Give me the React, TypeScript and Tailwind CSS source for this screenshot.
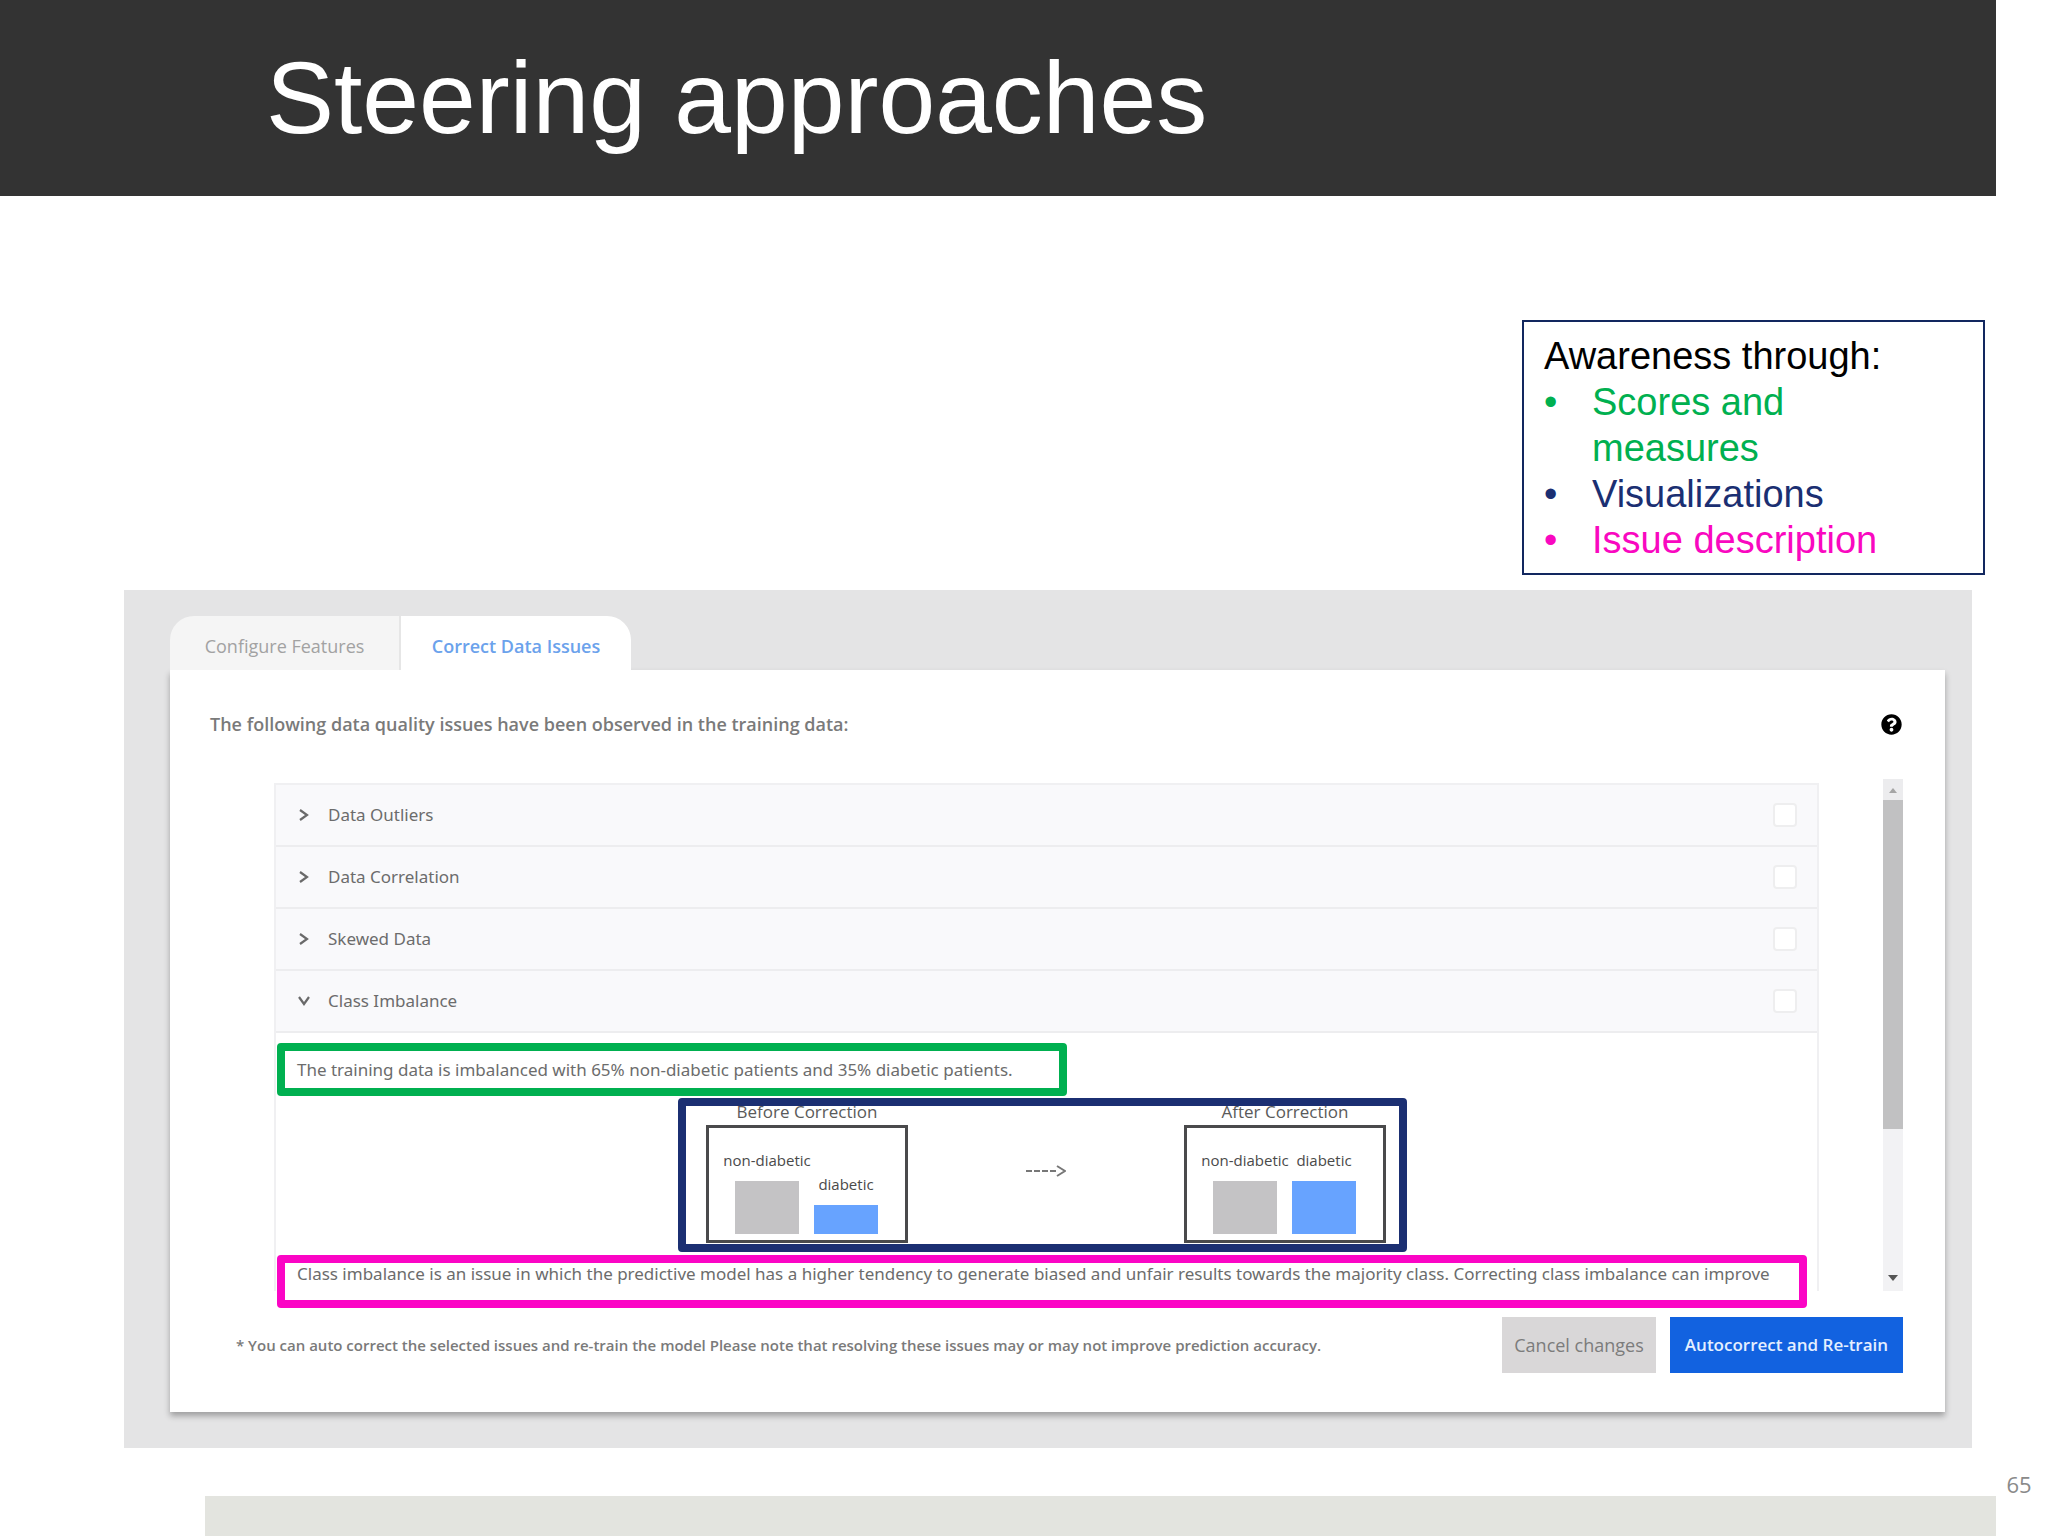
import { FaQuestionCircle } from "react-icons/fa";

const ISSUES = [
  { name: "Data Outliers", open: false },
  { name: "Data Correlation", open: false },
  { name: "Skewed Data", open: false },
  { name: "Class Imbalance", open: true },
];

const LEGEND = [
  { text: "Scores and measures", color: "text-[#00b050]" },
  { text: "Visualizations", color: "text-[#1b2f72]" },
  { text: "Issue description", color: "text-[#f908c0]" },
];

function Chevron({ open }: { open: boolean }) {
  return (
    <svg viewBox="0 0 12 12" className="h-3 w-3" fill="none" stroke="#6a6a6a" strokeWidth="2.2" aria-hidden="true">
      {open ? <path d="M1 2 L6 9 L11 2" /> : <path d="M2 1 L9 6 L2 11" />}
    </svg>
  );
}

function Bar({ label, className }: { label: string; className: string }) {
  return (
    <div className="flex w-16 flex-col items-center">
      <span className="pb-[9px] text-[15px] leading-6 whitespace-nowrap text-[#4a4a4a]">{label}</span>
      <div className={className} />
    </div>
  );
}

function Chart({ title, diabeticBar }: { title: string; diabeticBar: string }) {
  return (
    <figure className="w-[202px]">
      <figcaption className="flex h-[19px] items-end justify-center pb-px text-[17px] leading-6 whitespace-nowrap text-[#5a5a5a]">
        {title}
      </figcaption>
      <div className="flex h-[118px] items-end gap-[15px] border-3 border-[#4a4a4c] bg-white pb-[6px] pl-[26px]">
        <Bar label="non-diabetic" className="h-[53px] w-full bg-[#c4c3c5]" />
        <Bar label="diabetic" className={diabeticBar} />
      </div>
    </figure>
  );
}

export default function App() {
  return (
    <div className="flex min-h-screen flex-col bg-white font-['Open_Sans','Noto_Sans',sans-serif]">
      <header className="mr-13 flex h-49 items-center bg-[#333333] pl-[266px]">
        <h1 className="font-['Liberation_Sans',Arial,sans-serif] text-[102px] leading-none text-white">
          Steering approaches
        </h1>
      </header>

      <aside className="mt-31 mr-[63px] w-[463px] self-end border-2 border-[#12275f] px-5 pt-[11px] pb-[10px] font-['Liberation_Sans',Arial,sans-serif] text-[38px] leading-[46px]">
        <p className="text-black">Awareness through:</p>
        <ul className="pr-20">
          {LEGEND.map((item) => (
            <li key={item.text} className={item.color}>
              <span className="flex">
                <span className="w-12 shrink-0">•</span>
                <span>{item.text}</span>
              </span>
            </li>
          ))}
        </ul>
      </aside>

      <main className="mt-[15px] mr-19 ml-31 bg-[#e4e4e5] pt-[26px] pr-[27px] pb-9 pl-[46px]">
        <div role="tablist" className="flex">
          <button role="tab" aria-selected="false" className="h-[54px] w-[231px] rounded-tl-3xl border-r-2 border-[#e6e6e6] bg-[#f5f5f5] pt-[6px] text-lg text-[#a2a2a2]">
            Configure Features
          </button>
          <button role="tab" aria-selected="true" className="h-[54px] w-[230px] rounded-tr-3xl bg-white pt-[6px] text-lg font-semibold text-[#6ba2ec]">
            Correct Data Issues
          </button>
        </div>

        <section className="bg-white pt-9 pr-[42px] pb-[39px] pl-10 shadow-[0_4px_6px_rgba(0,0,0,0.3)]">
          <div className="flex h-9 items-center justify-between">
            <h2 className="text-lg font-semibold text-[#7a7a7a]">
              The following data quality issues have been observed in the training data:
            </h2>
            <button aria-label="Help" className="mr-px text-[21px] text-black">
              <FaQuestionCircle />
            </button>
          </div>

          <div className="mt-[37px] flex">
            <div className="mt-1 mr-16 ml-16 min-w-0 flex-1 border-x-2 border-t-2 border-[#f0f0f2]">
              {ISSUES.map((issue) => (
                <div key={issue.name} className="flex h-[62px] items-center justify-between border-b-2 border-[#ededef] bg-[#f9f9fb] pr-5 pl-[22px]">
                  <button aria-expanded={issue.open} className="flex items-center gap-[18px] font-['Noto_Sans',sans-serif] text-[17px] text-[#6c6c6c]">
                    <Chevron open={issue.open} />
                    {issue.name}
                  </button>
                  <input
                    type="checkbox"
                    aria-label={issue.name}
                    className="h-6 w-6 appearance-none rounded-sm border-2 border-[#eeeeef] bg-white"
                  />
                </div>
              ))}
              <div className="-mb-[17px] flex flex-col pt-[10px]">
                <p className="ml-px w-[790px] rounded-sm border-8 border-[#00b050] pl-3 font-['Noto_Sans',sans-serif] text-[17px] leading-[37px] text-[#6c6c6c]">
                  The training data is imbalanced with 65% non-diabetic patients and 35% diabetic patients.
                </p>
                <div className="mt-[2px] flex justify-center pr-2">
                  <div className="flex h-[154px] w-[729px] justify-between overflow-hidden rounded-sm border-8 border-[#1b2f72] pr-[13px] pl-5">
                    <Chart title="Before Correction" diabeticBar="h-[29px] w-full bg-[#67a3ff]" />
                    <svg viewBox="0 0 40 12" className="mt-[59px] h-3 w-10" fill="none" stroke="#777" strokeWidth="2" aria-label="becomes">
                      <path d="M0 6 H30" strokeDasharray="6 2" />
                      <path d="M31 1 L39 6 L31 11" />
                    </svg>
                    <Chart title="After Correction" diabeticBar="h-[53px] w-full bg-[#67a3ff]" />
                  </div>
                </div>
                <p className="mt-[3px] mr-[10px] ml-px rounded-sm border-8 border-[#fb05c5] pb-[15px] pl-3 font-['Noto_Sans',sans-serif] text-[17px] leading-[22px] whitespace-nowrap text-[#6c6c6c]">
                  Class imbalance is an issue in which the predictive model has a higher tendency to generate biased and
                  unfair results towards the majority class. Correcting class imbalance can improve
                </p>
              </div>
            </div>

            <div className="flex w-5 flex-col bg-[#f2f2f4]">
              <svg viewBox="0 0 20 21" className="h-[21px] w-5 bg-[#ececee]" aria-hidden="true">
                <path d="M6 14 L10 9 L14 14 Z" fill="#a5a5a5" />
              </svg>
              <div className="h-[329px] bg-[#c1c1c2]" />
              <svg viewBox="0 0 20 21" className="mt-auto h-[21px] w-5" aria-hidden="true">
                <path d="M5 5 L10 11 L15 5 Z" fill="#555" />
              </svg>
            </div>
          </div>

          <div className="mt-[26px] flex items-center justify-between">
            <p className="pl-[26px] text-[15px] font-semibold text-[#7a7a7a]">
              * You can auto correct the selected issues and re-train the model Please note that resolving these issues
              may or may not improve prediction accuracy.
            </p>
            <div className="flex gap-[14px]">
              <button className="h-14 w-[154px] bg-[#d9d7d8] text-lg text-[#7c7c7c]">Cancel changes</button>
              <button className="h-14 w-[233px] bg-[#1262e0] text-[17px] font-semibold text-[#e4efff]">
                Autocorrect and Re-train
              </button>
            </div>
          </div>
        </section>
      </main>

      <footer className="flex flex-1 pt-5">
        <div className="mt-7 ml-[205px] flex-1 bg-[#e3e4df]" />
        <span className="w-13 pr-[6px] text-center text-[22px] leading-8 text-[#8a8a8a]">65</span>
      </footer>
    </div>
  );
}
